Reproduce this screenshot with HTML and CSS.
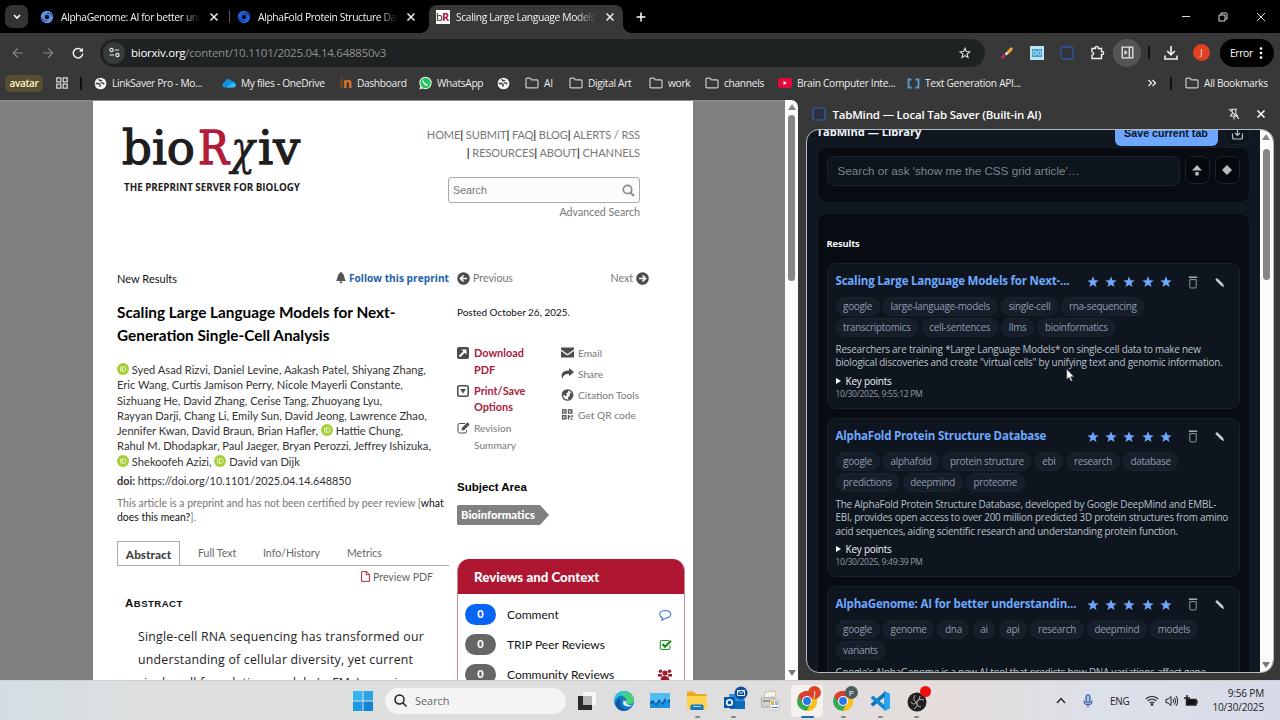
FILE: index.html
```html
<!DOCTYPE html>
<html lang="en">
<head>
  <meta charset="UTF-8" />
  <title>Scaling Large Language Models for Next-Generation Single-Cell Analysis</title>
  <link rel="stylesheet" href="styles.css">
</head>
<body>

  <svg class="sprite" width="0" height="0">
    <symbol id="x" viewBox="0 0 10 10"><path d="M1.500 1.500l7 7M8.500 1.500l-7 7" fill="none" stroke="currentColor" stroke-width="1.500"/></symbol>
    <symbol id="swirl" viewBox="0 0 14 14"><circle cx="7" cy="7" r="6.200" fill="currentColor"/><circle cx="7" cy="7" r="2.300" fill="#080b18"/><path d="M7 3.200c2.600-.6 5 1 5.300 3.400M7 10.800c-2.600.6-5-1-5.300-3.400" fill="none" stroke="#0c1b4d" stroke-width=".8"/></symbol>
    <symbol id="globe" viewBox="0 0 14 14"><circle cx="7" cy="7" r="6.300" fill="#f4f4f4"/><path d="M1.800 7h3l2 1.800-.6 1.700M5.200 2.200l1 1.800 2.600-.3M7 6.300h2.500l1.500 1.400" fill="none" stroke="#383838" stroke-width="1.400"/></symbol>
    <symbol id="folder" viewBox="0 0 14 12"><path d="M1 2.200q0-1 1-1h3l1.500 1.700H12q1 0 1 1v5.900q0 1-1 1H2q-1 0-1-1z" fill="none" stroke="#c9c9c9" stroke-width="1.200"/></symbol>
    <symbol id="star" viewBox="0 0 12 12"><path d="M6 .3l1.500 3.900 4.200.2-3.300 2.600 1.200 4.100L6 8.800l-3.600 2.300 1.200-4.100L.3 4.400l4.200-.2z" fill="#6ea8fe"/></symbol>
    <symbol id="trash" viewBox="0 0 10 13"><path d="M.8 1.200h8.400" fill="none" stroke="#b4bac3" stroke-width="1.400"/><path d="M1.800 3.600h6.400v7.200q0 1.200-1.200 1.200H3q-1.200 0-1.200-1.200z" fill="none" stroke="#9299a4"/></symbol>
    <symbol id="pencil" viewBox="0 0 12 12"><path d="M1.300 3L3.300 1 9.800 7.300l1.400 3.900-3.700-1.800z" fill="#c3c7ce"/></symbol>
    <symbol id="orcid" viewBox="0 0 12 12"><circle cx="6" cy="6" r="6" fill="#a6ce39"/><path d="M3.700 3.600v5M5.500 3.800v4.600h1.200c3 0 3-4.600 0-4.600z" fill="none" stroke="#eef8cf"/></symbol>
    <symbol id="chrome" viewBox="0 0 22 22"><circle cx="11" cy="11" r="10" fill="#34a853"/><path d="M2.300 6A10 10 0 0 1 20 6.500H11L7 13z" fill="#e33b2e"/><path d="M20 6.500A10 10 0 0 1 10.500 21L15 13l-2-6.500z" fill="#fbc116"/><circle cx="11" cy="11" r="5" fill="#fff"/><circle cx="11" cy="11" r="3.900" fill="#2877e8"/></symbol>
  </svg>

  <!-- tab strip -->
  <div class="tabstrip">
    <div class="tab-search"><svg width="8" height="6" viewBox="0 0 8 6"><path d="M1 1l3 3 3-3" fill="none" stroke="#fff" stroke-width="1.600"/></svg></div>
    <div class="tab">
      <svg class="fav light" width="14" height="14"><use href="#swirl"/></svg>
      <span class="tab-title">AlphaGenome: AI for better und</span>
      <svg class="close" width="10" height="10"><use href="#x"/></svg>
    </div>
    <div class="tab">
      <svg class="fav dark" width="14" height="14"><use href="#swirl"/></svg>
      <span class="tab-title">AlphaFold Protein Structure Dat</span>
      <svg class="close" width="10" height="10"><use href="#x"/></svg>
    </div>
    <div class="tab active">
      <span class="fav br">b<b>R</b></span>
      <span class="tab-title">Scaling Large Language Models</span>
      <svg class="close" width="10" height="10"><use href="#x"/></svg>
    </div>
    <svg class="new-tab" width="10" height="10" viewBox="0 0 10 10"><path d="M5 .6v8.800M.6 5h8.800" stroke="#fff" stroke-width="1.500"/></svg>
    <div class="win-buttons">
      <svg width="10" height="10" viewBox="0 0 10 10"><path d="M1 4.500h8" stroke="#ddd"/></svg>
      <svg width="10" height="10" viewBox="0 0 10 10"><path d="M1 3h6v6H1zM3 2.500V1h5.200q.8 0 .8.800V7H7.500" fill="none" stroke="#ddd"/></svg>
      <svg width="10" height="10" viewBox="0 0 10 10"><path d="M1 1l8 8M9 1L1 9" stroke="#ddd"/></svg>
    </div>
  </div>

  <!-- address bar -->
  <div class="toolbar">
    <div class="nav-buttons">
      <svg width="12" height="12" viewBox="0 0 12 12"><path d="M11 6H1.500M5.800 1.500L1.300 6l4.500 4.500" fill="none" stroke="#858585" stroke-width="1.200"/></svg>
      <svg width="12" height="12" viewBox="0 0 12 12"><path d="M1 6h9.500M6.200 1.500L10.700 6l-4.500 4.500" fill="none" stroke="#858585" stroke-width="1.200"/></svg>
      <svg width="12" height="12" viewBox="0 0 12 12"><path d="M10.700 6.500A4.700 4.700 0 1 1 9.300 2.800l1 1" fill="none" stroke="#f2f2f2" stroke-width="1.500"/><path d="M11 .8v4H7z" fill="#f2f2f2"/></svg>
    </div>
    <div class="omnibox">
      <span class="site-info"><svg width="11" height="11" viewBox="0 0 11 11" fill="none" stroke="#e5e5e5" stroke-width="1.200"><circle cx="2.500" cy="3" r="1.600"/><path d="M5.800 3H10M.5 8h4.700"/><circle cx="8.500" cy="8" r="1.600"/></svg></span>
      <span class="url">biorxiv.org<i>/content/10.1101/2025.04.14.648850v3</i></span>
      <svg width="12" height="12" viewBox="0 0 12 12"><path d="M6 1.200l1.300 3.300 3.600.2-2.800 2.300.9 3.500L6 8.600l-3 1.900.9-3.500-2.800-2.300 3.600-.2z" fill="none" stroke="#ddd" stroke-width="1.100"/></svg>
    </div>
    <div class="extensions">
      <div><svg width="14" height="14" viewBox="0 0 14 14" fill="none" stroke-linecap="round"><path d="M8 6.500L11.200 3" stroke="#f0a634" stroke-width="3.200"/><path d="M5.500 8.500L7.500 7" stroke="#dfe7ee" stroke-width="2.600" stroke-linecap="butt"/><path d="M2.300 11.600L4.200 9.800" stroke="#c92560" stroke-width="2.800"/></svg></div>
      <div><svg width="14" height="14" viewBox="0 0 14 14"><path d="M0 0h14v14H0z" fill="#bfe2f1"/><path d="M2 3h10v8H2z" fill="#3f9fce"/><path d="M3.500 5h2.500v4H3.500zM8 5h2.500v4H8zM6 7h2" fill="none" stroke="#d3edf8" stroke-width=".7"/></svg></div>
      <div><svg width="14" height="14" viewBox="0 0 14 14"><rect x="1" y="1" width="12" height="12" rx="2" fill="#2f333b" stroke="#3058a4" stroke-width="1.300"/></svg></div>
      <div><svg width="15" height="15" viewBox="0 0 15 15"><path d="M2 3.500h3.200c-.6-2.800 3.600-2.800 3 0H11.500v3c2.800-.6 2.800 3.600 0 3v4H2v-3.300c2.200-.3 2.200-3 0-3.300z" fill="none" stroke="#f2f2f2" stroke-width="1.400"/></svg></div>
      <div class="pressed"><svg width="13" height="13" viewBox="0 0 13 13"><path d="M1.200 1.200h10.600v10.600H1.200zM8.300 1v11" fill="none" stroke="#e8e8e8" stroke-width="1.300"/><path d="M3.500 4l3 2.500-3 2.500z" fill="#e8e8e8"/></svg></div>
    </div>
    <span class="divider"></span>
    <svg class="download" width="14" height="14" viewBox="0 0 14 14"><path d="M7 0v8.500M3.200 5L7 8.800 10.800 5M1 9.500V13h12V9.500" fill="none" stroke="#f2f2f2" stroke-width="1.600"/></svg>
    <span class="profile">J</span>
    <span class="error">Error <svg width="4" height="14" viewBox="0 0 4 14" fill="#fff"><circle cx="2" cy="2.500" r="1.300"/><circle cx="2" cy="7" r="1.300"/><circle cx="2" cy="11.500" r="1.300"/></svg></span>
  </div>

  <!-- bookmarks -->
  <div class="bookmarks">
    <div><span class="group-chip">avatar</span></div>
    <div><svg width="12" height="12" viewBox="0 0 12 12" fill="none" stroke="#d5d5d5" stroke-width="1.300"><path d="M.8.8H4.800v4H.8zM7.200.8h4v4h-4zM.8 7.200H4.800v4H.8zM7.200 7.200h4v4h-4z"/></svg></div>
    <div><span class="divider"></span></div>
    <div><svg width="13" height="13"><use href="#globe"/></svg>LinkSaver Pro - Mo...</div>
    <div><svg width="14" height="10" viewBox="0 0 14 10"><path d="M3 9.500C-.5 9.500-.5 5 2.500 4.500 3.500.5 8-.5 9.800 3.300 14.500 3 15 9.500 11 9.500z" fill="#1490df"/><path d="M4.500 9.500L10 5q4 0 4 2.500-.3 2-3 2z" fill="#32b8f1"/></svg>My files - OneDrive</div>
    <div class="dash"><b><i>i</i>n</b>Dashboard</div>
    <div><svg width="13" height="14" viewBox="0 0 13 14"><circle cx="6.500" cy="7" r="6.200" fill="#eafbee"/><path d="M.5 13.500l.8-3.500 2.200 2.500z" fill="#eafbee"/><circle cx="6.500" cy="7" r="5.200" fill="#24c45a"/><path d="M4.300 4.500c-.8 1.500 2.200 5 4.500 4.600" fill="none" stroke="#fff" stroke-width="1.400"/></svg>WhatsApp</div>
    <div><svg width="13" height="13"><use href="#globe"/></svg></div>
    <div><svg width="14" height="12"><use href="#folder"/></svg>AI</div>
    <div><svg width="14" height="12"><use href="#folder"/></svg>Digital Art</div>
    <div><svg width="14" height="12"><use href="#folder"/></svg>work</div>
    <div><svg width="14" height="12"><use href="#folder"/></svg>channels</div>
    <div><svg width="14" height="10" viewBox="0 0 14 10"><rect width="14" height="10" rx="2.500" fill="#e3083a"/><path d="M5.500 3v4L9 5z" fill="#fff"/></svg>Brain Computer Inte...</div>
    <div><svg width="13" height="11" viewBox="0 0 13 11"><path d="M4.500 1.500h-3v8h3M8.500 1.500h3v8h-3" fill="none" stroke="#5b9fd0" stroke-width="1.800"/></svg>Text Generation API...</div>
    <div><svg width="10" height="8" viewBox="0 0 10 8"><path d="M1.500 1l3 3-3 3M5.500 1l3 3-3 3" fill="none" stroke="#eee" stroke-width="1.300"/></svg></div>
    <div><span class="divider"></span></div>
    <div><svg width="14" height="12"><use href="#folder"/></svg>All Bookmarks</div>
  </div>

  <div class="window">
    <!-- bioRxiv page -->
    <div class="page">
      <div class="sheet">
        <header>
          <div class="logo">
            <svg width="182" height="47" viewBox="0 0 182 47">
              <g class="logo-text">
                <text x="1" y="36" textLength="73" lengthAdjust="spacingAndGlyphs">bio</text>
                <text class="red" x="77" y="36" textLength="31" lengthAdjust="spacingAndGlyphs">R</text>
                <text class="chi" x="110" y="36" textLength="24" lengthAdjust="spacingAndGlyphs">χ</text>
                <text x="137" y="36" textLength="42" lengthAdjust="spacingAndGlyphs">iv</text>
              </g>
            </svg>
            <div class="tagline">THE PREPRINT SERVER FOR BIOLOGY</div>
          </div>
          <div class="header-right">
            <div class="menu">HOME<b>|</b> SUBMIT<b>|</b> FAQ<b>|</b> BLOG<b>|</b> ALERTS / RSS<br><b>|</b> RESOURCES<b>|</b> ABOUT<b>|</b> CHANNELS</div>
            <div class="search-box">Search <svg width="13" height="13" viewBox="0 0 13 13" fill="none" stroke="#8d8d8d"><circle cx="5.500" cy="5.500" r="4.200" stroke-width="1.800"/><path d="M8.500 8.500l3.500 3.500" stroke-width="2.200"/></svg></div>
            <div class="advanced">Advanced Search</div>
          </div>
        </header>

        <div class="columns">
          <div class="article">
            <div class="article-top">
              <span>New Results</span>
              <span class="follow"><svg width="10" height="12" viewBox="0 0 10 12"><path d="M5 0q1 0 1 1c2.500.8 2 5 3.800 8H.2C2 6 1.500 1.800 4 1q0-1 1-1zM3.500 9.500h3q-.3 2-1.500 2t-1.500-2z" fill="#555"/></svg>Follow this preprint</span>
            </div>
            <h1>Scaling Large Language Models for Next-<br>Generation Single-Cell Analysis</h1>
            <p class="authors">
              <svg width="12" height="12"><use href="#orcid"/></svg> Syed Asad Rizvi, Daniel Levine, Aakash Patel, Shiyang Zhang,<br>
              Eric Wang, Curtis Jamison Perry, Nicole Mayerli Constante,<br>
              Sizhuang He, David Zhang, Cerise Tang, Zhuoyang Lyu,<br>
              Rayyan Darji, Chang Li, Emily Sun, David Jeong, Lawrence Zhao,<br>
              Jennifer Kwan, David Braun, Brian Hafler, <svg width="12" height="12"><use href="#orcid"/></svg> Hattie Chung,<br>
              Rahul M. Dhodapkar, Paul Jaeger, Bryan Perozzi, Jeffrey Ishizuka,<br>
              <svg width="12" height="12"><use href="#orcid"/></svg> Shekoofeh Azizi, <svg width="12" height="12"><use href="#orcid"/></svg> David van Dijk
            </p>
            <p class="doi"><b>doi:</b> https://doi.org/10.1101/2025.04.14.648850</p>
            <p class="note">This article is a preprint and has not been certified by peer review [<a>what<br>does this mean?</a>].</p>
            <div class="article-tabs">
              <span class="current">Abstract</span><span>Full Text</span><span>Info/History</span><span>Metrics</span>
            </div>
            <div class="preview"><svg width="9" height="11" viewBox="0 0 9 11"><path d="M.6.6h4.900l2.900 2.900v6.900H.6zM5.300.6v3.100h3" fill="none" stroke="#b0283f"/></svg>Preview PDF</div>
            <h2><span>A</span>BSTRACT</h2>
            <p class="abstract">Single-cell RNA sequencing has transformed our<br>understanding of cellular diversity, yet current<br>single-cell foundation models (scFMs) remain</p>
          </div>

          <aside>
            <div class="pager">
              <span><svg width="13" height="13" viewBox="0 0 13 13"><circle cx="6.500" cy="6.500" r="6.300" fill="#4d4d4d"/><path d="M10 6.500H4M6.500 3.500l-3 3 3 3" fill="none" stroke="#fff" stroke-width="1.700"/></svg>Previous</span>
              <span>Next<svg width="13" height="13" viewBox="0 0 13 13"><circle cx="6.500" cy="6.500" r="6.300" fill="#4d4d4d"/><path d="M3 6.500h6M6.500 3.500l3 3-3 3" fill="none" stroke="#fff" stroke-width="1.700"/></svg></span>
            </div>
            <div class="posted">Posted October 26, 2025.</div>
            <div class="tools">
              <ul class="main-tools">
                <li class="red"><svg width="12" height="12" viewBox="0 0 12 12"><rect width="12" height="12" rx="2" fill="#4d4d4d"/><path d="M2.500 9.500l5-5" stroke="#fff" stroke-width="2"/><path d="M4.500 2.500h5v5z" fill="#fff"/></svg>Download<br>PDF</li>
                <li class="red"><svg width="12" height="12" viewBox="0 0 12 12"><rect x=".8" y=".8" width="10.400" height="10.400" rx="1.500" fill="none" stroke="#4d4d4d" stroke-width="1.600"/><path d="M3 4h6L6 8.500z" fill="#4d4d4d"/></svg>Print/Save<br>Options</li>
                <li><svg width="13" height="12" viewBox="0 0 13 12"><path d="M8 1.500H2.500q-1.500 0-1.500 1.500v6.500Q1 11 2.500 11H8q1.500 0 1.500-1.500V8" fill="none" stroke="#4d4d4d"/><path d="M4.500 8.500l.5-2.800L10.500.3 12.700 2.500 7.300 8z" fill="#4d4d4d"/></svg>Revision<br>Summary</li>
              </ul>
              <ul>
                <li><svg width="13" height="11" viewBox="0 0 13 11"><path d="M0 .5h13v2L6.500 7 0 2.500zM0 4l6.500 4.500L13 4v6.500H0z" fill="#4d4d4d"/></svg>Email</li>
                <li><svg width="13" height="12" viewBox="0 0 13 12"><path d="M8 0l5 4-5 4.300V6Q2.500 5.500 1.200 11-1.500 2.500 8 2.500z" fill="#4d4d4d"/></svg>Share</li>
                <li><svg width="13" height="12" viewBox="0 0 12 12"><circle cx="6" cy="6" r="5.200" fill="#f5f5f5" stroke="#4d4d4d" stroke-width="1.300"/><path d="M1.200 3.500Q3.500 0 7 1.200L6.500 3.500 4.500 4l1 1.500-1 1.500-3-1zM8.500 3.500L11 5l-.8 3.500L7 11 6.500 8l1.800-.7z" fill="#4d4d4d"/></svg>Citation Tools</li>
                <li><svg width="13" height="11" viewBox="0 0 13 11" fill="none" stroke="#555" stroke-width="1.300"><path d="M1.600.8h3.400v3.300H1.600zM7.500.8h3.400v3.300H7.500zM1.600 6.600h3.400v3.300H1.600zM3 2.400h.8M9 2.400h.8M3 8.200h.8M7.500 6v4.500M7.500 7.500h2M11 6v2.500M9.500 10.200h2"/></svg>Get QR code</li>
              </ul>
            </div>
            <h3>Subject Area</h3>
            <span class="subject">Bioinformatics</span>
            <div class="reviews">
              <h4>Reviews and Context</h4>
              <div class="review"><span class="count blue">0</span>Comment<svg width="13" height="12" viewBox="0 0 13 12"><path d="M3.500 8.800C-1 6.500.500 1.500 6.500 1.500S13.800 8 7 9.300L2.800 11z" fill="none" stroke="#3f73dc" stroke-width="1.100"/></svg></div>
              <div class="review"><span class="count">0</span>TRIP Peer Reviews<svg width="13" height="12" viewBox="0 0 13 12"><path d="M10 1.500H2.800q-1.500 0-1.500 1.500v6q0 1.500 1.500 1.500h6.700q1.500 0 1.500-1.500V6.500" fill="none" stroke="#199c19" stroke-width="1.100"/><path d="M3.500 5L6 7.700l6-6" fill="none" stroke="#108a10" stroke-width="2"/></svg></div>
              <div class="review"><span class="count">0</span>Community Reviews<svg width="14" height="12" viewBox="0 0 14 12" fill="#9c1a2c"><circle cx="2.500" cy="2.300" r="1.800"/><circle cx="11.500" cy="2.300" r="1.800"/><circle cx="7" cy="4" r="2.600"/><path d="M0 7.500V5h3.500l1 2.500zM14 7.500V5h-3.500l-1 2.500zM2.500 12q0-5.500 4.500-5t4.500 5z"/></svg></div>
            </div>
          </aside>
        </div>
      </div>
    </div>
    <div class="scrollbar page-scroll"><i class="up"></i><i class="thumb"></i><i class="down"></i></div>

    <!-- side panel -->
    <div class="side">
      <div class="side-title">
        <svg width="14" height="14" viewBox="0 0 14 14"><rect x="1" y="1" width="12" height="12" rx="2" fill="#2b313d" stroke="#3260b4" stroke-width="1.200"/></svg>
        <span>TabMind — Local Tab Saver (Built-in AI)</span>
        <svg class="pin" width="12" height="12" viewBox="0 0 12 12" fill="none" stroke="#e5e5e5" stroke-width="1.100"><path d="M3 1.200h6M4.200 1.500v4L2.500 8h7L7.800 5.500v-4M6 8v3.500M1 .8l10 10"/></svg>
        <svg width="10" height="10"><use href="#x"/></svg>
      </div>
      <div class="frame">
        <div class="app">
          <div class="app-head">
            <strong>TabMind — Library</strong>
            <button class="save">Save current tab</button>
            <button class="icon-btn import"><svg width="13" height="13" viewBox="0 0 13 13"><path d="M6.500 1v7.500M4 6l2.500 2.500L9 6M1.500 6.500V10q0 2 2 2h6q2 0 2-2V6.500" fill="none" stroke="#b7bcc4" stroke-width="1.200"/></svg></button>
          </div>
          <div class="card search-card">
            <div class="query">Search or ask 'show me the CSS grid article'…</div>
            <button class="icon-btn"><svg width="10" height="11" viewBox="0 0 10 11"><path d="M5 0l5 5.500H0zM3.300 7h3.400v3.500H3.300z" fill="#b7babf"/></svg></button>
            <button class="icon-btn"><svg width="10" height="10" viewBox="0 0 10 10"><path d="M5 0l5 5-5 5-5-5z" fill="#b7babf"/></svg></button>
          </div>
          <div class="card results">
            <h5>Results</h5>

            <div class="item">
              <div class="item-head">
                <a>Scaling Large Language Models for Next-...</a>
                <span class="stars"><svg><use href="#star"/></svg><svg><use href="#star"/></svg><svg><use href="#star"/></svg><svg><use href="#star"/></svg><svg><use href="#star"/></svg></span>
                <svg width="10" height="13"><use href="#trash"/></svg>
                <svg class="edit" width="11" height="11"><use href="#pencil"/></svg>
              </div>
              <div class="tags"><span>google</span><span>large-language-models</span><span>single-cell</span><span>rna-sequencing</span></div>
              <div class="tags"><span>transcriptomics</span><span>cell-sentences</span><span>llms</span><span>bioinformatics</span></div>
              <p>Researchers are training *Large Language Models* on single-cell data to make new<br>biological discoveries and create "virtual cells" by unifying text and genomic information.</p>
              <div class="key">Key points</div>
              <time>10/30/2025, 9:55:12 PM</time>
            </div>

            <div class="item">
              <div class="item-head">
                <a>AlphaFold Protein Structure Database</a>
                <span class="stars"><svg><use href="#star"/></svg><svg><use href="#star"/></svg><svg><use href="#star"/></svg><svg><use href="#star"/></svg><svg><use href="#star"/></svg></span>
                <svg width="10" height="13"><use href="#trash"/></svg>
                <svg class="edit" width="11" height="11"><use href="#pencil"/></svg>
              </div>
              <div class="tags"><span>google</span><span>alphafold</span><span>protein structure</span><span>ebi</span><span>research</span><span>database</span></div>
              <div class="tags"><span>predictions</span><span>deepmind</span><span>proteome</span></div>
              <p>The AlphaFold Protein Structure Database, developed by Google DeepMind and EMBL-<br>EBI, provides open access to over 200 million predicted 3D protein structures from amino<br>acid sequences, aiding scientific research and understanding protein function.</p>
              <div class="key">Key points</div>
              <time>10/30/2025, 9:49:39 PM</time>
            </div>

            <div class="item">
              <div class="item-head">
                <a>AlphaGenome: AI for better understandin...</a>
                <span class="stars"><svg><use href="#star"/></svg><svg><use href="#star"/></svg><svg><use href="#star"/></svg><svg><use href="#star"/></svg><svg><use href="#star"/></svg></span>
                <svg width="10" height="13"><use href="#trash"/></svg>
                <svg class="edit" width="11" height="11"><use href="#pencil"/></svg>
              </div>
              <div class="tags"><span>google</span><span>genome</span><span>dna</span><span>ai</span><span>api</span><span>research</span><span>deepmind</span><span>models</span></div>
              <div class="tags"><span>variants</span></div>
              <p>Google's AlphaGenome is a new AI tool that predicts how DNA variations affect gene</p>
            </div>
          </div>
        </div>
        <div class="scrollbar"><i class="up"></i><i class="thumb"></i><i class="down"></i></div>
      </div>
    </div>
  </div>

  <!-- taskbar -->
  <div class="taskbar">
    <svg class="start" width="20" height="20" viewBox="0 0 20 20"><path d="M0 0h9.500v9.500H0z" fill="#35b5ee"/><path d="M10.500 0H20v9.500h-9.500z" fill="#29a4e6"/><path d="M0 10.500h9.500V20H0z" fill="#1d9be2"/><path d="M10.500 10.500H20V20h-9.500z" fill="#0f84d6"/></svg>
    <div class="task-search"><svg width="13" height="13" viewBox="0 0 13 13" fill="none" stroke="#222" stroke-width="1.500"><circle cx="5.500" cy="5.500" r="4.500"/><path d="M8.800 8.800L12.500 12.500"/></svg>Search</div>
    <div class="apps">
      <div><svg width="22" height="22" viewBox="0 0 22 22"><path d="M7 2h13v13H7z" fill="#f7f7f7"/><path d="M2 6h14v14H2z" fill="#2b2b2b"/><path d="M7 6h9v9H7z" fill="#b7b7b7"/></svg></div>
      <div><svg width="22" height="22" viewBox="0 0 22 22"><circle cx="11" cy="11" r="10" fill="#127bc9"/><path d="M1.500 8C4-1 18-2 21 8.500q.5 6-6 6-3.500 0-1.500-3.500C13 5 4 4 1.500 8z" fill="#48cf79"/><path d="M1.500 8C3 1 12-1 17 3 10 2 4 6 1.500 12z" fill="#2fc2dd"/><path d="M8 10c-3 6 3 11 9 8.500-4 4-13 3-14-3.500-.6-4 3-7 5-5z" fill="#0c57a4"/><path d="M10.500 10.500q-2 5 4 6 3 .3 5-1.500-2 .5-4.500-.3-3-1-1.500-3.200z" fill="#dceef2"/></svg></div>
      <div><svg width="22" height="22" viewBox="0 0 22 22"><path d="M1 3h20v15H1z" fill="#0b5fa8"/><path d="M1 3h20v6l-3 2-2-3-3 5-3-4-3 5-3-4-3 2z" fill="#52bdf2"/><path d="M1 14l3-1 3 3 4-4 3 3 3-5 4 3v5H1z" fill="#1994dd"/></svg></div>
      <div class="open"><svg width="22" height="22" viewBox="0 0 22 22"><path d="M1 3q0-1.500 1.500-1.500h5L10 4h9.500Q21 4 21 5.500V18H1z" fill="#e9a91f"/><path d="M1 6h20v12q0 1.500-1.500 1.500h-17Q1 19.500 1 18z" fill="#fdd250"/><path d="M4.500 20v-4q0-1.500 1.500-1.500h10q1.500 0 1.500 1.500v4z" fill="#1678bd"/><path d="M7 16.500h8" stroke="#9cd8f4"/></svg></div>
      <div class="open"><svg class="wide" width="26" height="26" viewBox="0 0 26 26"><path d="M7 8h15l1 14H9z" fill="#278fe0"/><path d="M8 15h15v8H8z" fill="#0f69bc"/><path d="M2 11h11v11H2z" fill="#0b59a6"/><circle cx="7.500" cy="16.500" r="2.800" fill="none" stroke="#fff" stroke-width="1.600"/><circle cx="19" cy="7" r="6.500" fill="#0e4f96"/><path d="M15.500 4.500h7v5h-7zl3.500 3 3.500-3" fill="none" stroke="#e3eefb"/></svg></div>
      <div><svg width="22" height="22" viewBox="0 0 22 22"><path d="M6 2l10-1 1 7H5z" fill="#f7f3e8" stroke="#b6ad9c" stroke-width=".7"/><path d="M2 8l13-1v10H3z" fill="#d3d2cf" stroke="#9b9892" stroke-width=".7"/><path d="M4 11h9" stroke="#867f75" stroke-width="1.500"/><path d="M11 10h9v10h-9z" fill="#fafafa" stroke="#aaa" stroke-width=".6"/><path d="M12 11h3v4h-3z" fill="#e5ae35"/><path d="M16 12h3M16 14h3M12.500 17.500h6.500" stroke="#397ab8"/></svg></div>
      <div class="open focused"><svg width="22" height="22"><use href="#chrome"/></svg><em>J</em></div>
      <div class="open"><svg width="22" height="22"><use href="#chrome"/></svg><em class="p">P</em></div>
      <div class="open"><svg width="22" height="22" viewBox="0 0 22 22"><path d="M15 1l6 2.500v15L15 21z" fill="#2aa5ee"/><path d="M16 1.500v5L4 16.500 1.500 14z" fill="#0c72bb"/><path d="M16 20.500v-5L4 5.500 1.500 8z" fill="#1489d3"/></svg></div>
      <div class="open"><svg width="22" height="22" viewBox="0 0 22 22"><circle cx="11" cy="12" r="9.500" fill="#211f20"/><path d="M9 5q-3 5 1.500 7.500M18 10q-6-2-7.500 2.500M8 19q5-3 2.500-7M5 12q2 4 5.500 0M14 6q0 4-3.500 6M15 17q-4 0-4.500-5" fill="none" stroke="#b7b4b5"/></svg><em class="rec"></em></div>
    </div>
    <div class="tray">
      <svg width="10" height="7" viewBox="0 0 10 7"><path d="M1 6l4-4.500L9 6" fill="none" stroke="#222" stroke-width="1.300"/></svg>
      <svg width="10" height="14" viewBox="0 0 10 14" fill="none" stroke="#2e569b" stroke-width="1.100"><rect x="3" y=".8" width="4" height="8" rx="2" fill="#a9bfe8"/><path d="M1 6.500q0 4.300 4 4.300t4-4.300M5 11v2.500"/></svg>
      <span class="lang">ENG</span>
      <svg width="14" height="11" viewBox="0 0 14 11" fill="none" stroke="#222" stroke-width="1.100"><path d="M.8 4Q7-1.500 13.200 4M2.800 6Q7 2 11.200 6M4.800 8Q7 6 9.200 8"/><circle cx="7" cy="9.500" r=".8" fill="#222"/></svg>
      <svg width="13" height="12" viewBox="0 0 13 12" fill="none" stroke="#222"><path d="M1 4.200h2L6 1.500v9L3 7.800H1zM8 4q1.500 2 0 4M9.500 2.500q2.800 3.500 0 7M11 1q3.500 5 0 10"/></svg>
      <svg width="14" height="12" viewBox="0 0 14 12"><path d="M2.500 4.500h9.500v5.500H2.500z" fill="#111" stroke="#222" stroke-width="1.500"/><path d="M13 5.500v3" stroke="#222" stroke-width="1.500"/><path d="M3 0v5M0 3h6" stroke="#222" stroke-width="1.500"/></svg>
      <div class="clock">9:56 PM<br>10/30/2025</div>
    </div>
  </div>

  <svg class="cursor" width="9" height="14" viewBox="0 0 9 14"><path d="M.7 1v10.500l2.400-2.200 1.700 3.900 1.600-.7-1.700-3.700H8z" fill="#fff" stroke="#333" stroke-width=".6"/></svg>

</body>
</html>
```
FILE: styles.css
```css
* {
  box-sizing: border-box;
}
body {
  margin: 0;
  width: 1280px;
  height: 720px;
  overflow: hidden;
  display: flex;
  flex-direction: column;
  position: relative;
  background: #383838;
  color: #eee;
  font-family: "Open Sans", sans-serif;
  white-space: nowrap;
}
svg {
  flex: none;
  display: block;
}
h1, h2, h3, h4, h5, p, ul {
  margin: 0;
  padding: 0;
}
.sprite {
  position: absolute;
}

/* tab strip */
.tabstrip {
  height: 33px;
  flex: none;
  background: #000;
  display: flex;
  align-items: center;
}
.tab-search {
  width: 23px;
  height: 23px;
  margin-left: 5px;
  margin-right: 4px;
  border-radius: 7px;
  background: #333;
  display: flex;
  align-items: center;
  justify-content: center;
}
.tab {
  width: 197px;
  height: 28px;
  padding-left: 8px;
  display: flex;
  align-items: center;
  align-self: flex-end;
  position: relative;
}
.tab + .tab::before {
  content: "";
  position: absolute;
  left: 0;
  top: 5px;
  width: 1px;
  height: 13px;
  background: #555;
}
.fav {
  width: 14px;
  height: 14px;
  margin-bottom: 5px;
}
.fav.light {
  color: #5f95e8;
}
.fav.dark {
  color: #1f5fd8;
}
.fav.br {
  background: #fff;
  color: #222;
  font: 11px/13px "Open Sans", sans-serif;
  letter-spacing: -0.8px;
}
.br b {
  color: #b01c3c;
}
.tab-title {
  width: 140px;
  margin-left: 7px;
  margin-bottom: 5px;
  overflow: hidden;
  font-size: 10.3px;
  letter-spacing: -0.36px;
  color: #f2f2f2;
  -webkit-mask-image: linear-gradient(90deg, #000 86%, transparent 100%);
  mask-image: linear-gradient(90deg, #000 86%, transparent 100%);
}
.close {
  margin-left: 8px;
  margin-bottom: 5px;
}
.tab + .tab.active {
  width: 194px;
  margin-left: 3px;
  padding-left: 7px;
  background: #383838;
  border-radius: 8px 8px 0 0;
}
.tab.active .tab-title {
  margin-left: 6px;
}
.tab.active .close {
  margin-left: 9px;
}
.tab + .tab.active::before, .tab.active::after {
  content: "";
  position: absolute;
  left: -8px;
  top: 20px;
  width: 8px;
  height: 8px;
  background: radial-gradient(circle at 0 0, transparent 7.5px, #383838 8px);
}
.tab.active::after {
  left: auto;
  right: -8px;
  background: radial-gradient(circle at 100% 0, transparent 7.5px, #383838 8px);
}
.new-tab {
  margin-left: 13px;
}
.win-buttons {
  margin-left: auto;
  margin-right: 14.5px;
  display: flex;
  gap: 27.5px;
}

/* toolbar */
.toolbar {
  height: 39px;
  flex: none;
  display: flex;
  align-items: center;
}
.nav-buttons {
  width: 100px;
  padding-left: 12px;
  display: flex;
  gap: 18px;
}
.omnibox {
  width: 885px;
  height: 28px;
  padding: 0 14px 0 3px;
  border-radius: 14px;
  background: #1f2223;
  display: flex;
  align-items: center;
}
.site-info {
  width: 22px;
  height: 22px;
  border-radius: 50%;
  background: #383b3c;
  display: flex;
  align-items: center;
  justify-content: center;
}
.url {
  flex: 1;
  margin-left: 6px;
  font-size: 11.5px;
  letter-spacing: -0.25px;
  color: #fff;
}
.url i {
  font-style: normal;
  color: #8e9091;
}
.extensions {
  margin-left: 8px;
  display: flex;
  gap: 2px;
}
.extensions div {
  width: 28px;
  height: 28px;
  border-radius: 50%;
  display: flex;
  align-items: center;
  justify-content: center;
}
.extensions .pressed {
  background: #545454;
}
.divider {
  width: 2px;
  height: 13px;
  background: #111;
}
.toolbar .divider {
  margin-left: 7px;
}
.download {
  margin-left: 14px;
}
.profile {
  width: 17px;
  height: 17px;
  margin-left: 15px;
  border-radius: 50%;
  background: #df4020;
  font-size: 9px;
  line-height: 17px;
  text-align: center;
}
.error {
  width: 54px;
  height: 28px;
  margin-left: 10px;
  padding: 0 11px 0 10px;
  border-radius: 14px;
  background: #000;
  color: #fff;
  font-size: 10.3px;
  letter-spacing: -0.35px;
  display: flex;
  align-items: center;
  justify-content: space-between;
}

/* bookmarks bar */
.bookmarks {
  height: 28px;
  flex: none;
  padding: 0 0 6px 5px;
  display: grid;
  grid-template-columns: 51px 24px 14px 128px 117px 80px 78px 28px 44px 80px 56px 73px 129px 240px 23px 15px 95px;
  font-size: 10.2px;
  letter-spacing: -0.31px;
}
.bookmarks div {
  display: flex;
  align-items: center;
  gap: 5px;
}
.group-chip {
  width: 38px;
  height: 17px;
  border-radius: 5px;
  background: #554e30;
  color: #fbf3c8;
  font-weight: 600;
  font-size: 10px;
  line-height: 16px;
  text-align: center;
}
.dash b {
  color: #e57b22;
  font-size: 14px;
  line-height: 14px;
}
.dash i {
  font-style: normal;
  color: #7c4625;
}

/* content area */
.window {
  height: 580px;
  flex: none;
  display: flex;
}
.page {
  width: 785px;
  background: #808080;
  border-top: 1px solid #8d8d8d;
  padding-left: 93px;
  overflow: hidden;
}
.sheet {
  width: 600px;
  height: 579px;
  padding-left: 24px;
  background: #fff;
  color: #333;
  font-family: Lato, sans-serif;
}
header {
  height: 167px;
  padding-left: 4px;
  width: 523px;
  display: flex;
  justify-content: space-between;
}
.logo {
  padding-top: 27px;
}
.logo svg {
  overflow: visible;
}
.logo-text {
  font-family: "DejaVu Serif", serif;
  font-size: 47px;
  fill: #1d1d1d;
  stroke: #1d1d1d;
  stroke-width: 1.3px;
}
.logo-text .red {
  fill: #b31b3b;
  stroke: #b31b3b;
}
.logo-text .chi {
  font-style: italic;
  stroke-width: 0.6px;
}
.tagline {
  margin: 5px 0 0 3px;
  font: 700 9.8px/16px "Open Sans", sans-serif;
  color: #1d1d1d;
}
.header-right {
  padding-top: 25px;
  text-align: right;
  color: #777;
}
.menu {
  font-size: 11.05px;
  line-height: 17.5px;
  letter-spacing: -0.1px;
}
.menu b {
  color: #333;
}
.search-box {
  width: 192px;
  height: 26px;
  margin: 16px 0 0 auto;
  padding: 0 4px;
  border: 1px solid #aaa;
  border-radius: 3px;
  background: #fcfcfc;
  display: flex;
  align-items: center;
  justify-content: space-between;
  font: 10.7px "Liberation Sans", sans-serif;
}
.advanced {
  font-size: 10.7px;
  line-height: 17px;
}
.columns {
  display: grid;
  grid-template-columns: 332px 228px;
  gap: 8px;
}
.article-top {
  height: 20px;
  display: flex;
  align-items: center;
  justify-content: space-between;
  font-size: 11.05px;
  color: #111;
}
.follow {
  display: flex;
  align-items: center;
  gap: 3px;
  font: 700 10.2px "Open Sans", sans-serif;
  color: #2361a8;
}
h1 {
  margin-top: 13px;
  font-size: 15.35px;
  font-weight: 700;
  line-height: 22.5px;
  color: #000;
}
.authors {
  margin-top: 16px;
  font-size: 11.15px;
  line-height: 15.3px;
}
.authors svg {
  display: inline-block;
  vertical-align: -1px;
}
.doi {
  margin-top: 4px;
  font-size: 10.88px;
  line-height: 15px;
}
.note {
  margin-top: 7.5px;
  font-size: 10.45px;
  line-height: 14px;
  color: #777;
}
.note a {
  color: #111;
}
.article-tabs {
  height: 26px;
  margin-top: 16px;
  padding-top: 1px;
  border-bottom: 1px solid #aaa;
  display: grid;
  grid-template-columns: 81px 65px 84px 60px;
  align-items: center;
  font-size: 10.54px;
  color: #666;
}
.article-tabs .current {
  width: 63px;
  height: 25px;
  border: 1px solid #aaa;
  border-bottom: 0;
  font-size: 11.8px;
  font-weight: 900;
  line-height: 25px;
  text-align: center;
  color: #444;
}
.preview {
  height: 22px;
  padding-right: 16px;
  display: flex;
  align-items: center;
  justify-content: flex-end;
  gap: 3px;
  font-size: 10.57px;
  color: #666;
}
h2 {
  margin: 6px 0 0 8px;
  font: 700 9.6px/18px "Liberation Sans", sans-serif;
  letter-spacing: 0.45px;
  color: #111;
}
h2 span {
  font-size: 11.5px;
}
.abstract {
  margin: 12px 0 0 21px;
  font: 12.3px/23px "Open Sans", sans-serif;
  letter-spacing: 0.23px;
  color: #222;
}

/* right column */
aside {
  color: #777;
}
.pager {
  width: 192px;
  height: 20px;
  display: flex;
  justify-content: space-between;
  font-size: 10.6px;
}
.pager span {
  display: flex;
  align-items: center;
  gap: 3px;
}
.posted {
  margin-top: 15px;
  font-size: 9.95px;
  line-height: 18px;
  color: #111;
}
.tools {
  margin-top: 24px;
  height: 134px;
  display: grid;
  grid-template-columns: 104px 124px;
  font-size: 10.2px;
}
.tools ul {
  list-style: none;
}
.tools li {
  display: grid;
  grid-template-columns: 17px auto;
  line-height: 16.8px;
  margin-bottom: 4px;
}
.tools li.red {
  font-size: 10.9px;
  font-weight: 700;
  color: #a81c3c;
}
.tools svg {
  margin-top: 2px;
}
h3 {
  font: 700 11.5px/16px "Liberation Sans", sans-serif;
  color: #000;
}
.subject {
  display: block;
  width: 92px;
  height: 20px;
  margin-top: 10px;
  padding-left: 4px;
  background: #808080;
  clip-path: polygon(0 1px, 1px 0, 83px 0, 100% 50%, 83px 100%, 1px 100%, 0 19px);
  color: #fff;
  font-size: 11.3px;
  font-weight: 900;
  line-height: 19px;
}
.reviews {
  height: 140px;
  margin-top: 34px;
  border: 1px solid #c98793;
  border-radius: 12px 12px 0 0;
  border-top: 0;
  overflow: hidden;
}
h4 {
  height: 35px;
  margin: 0 -1px;
  padding-left: 17px;
  background: #ae1632;
  color: #fff;
  font-size: 13.3px;
  font-weight: 900;
  line-height: 36px;
}
.review {
  height: 30px;
  padding: 0 12px 0 7px;
  display: flex;
  align-items: center;
  font-size: 12px;
  color: #111;
}
h4 + .review {
  margin-top: 5.5px;
}
.review svg {
  margin-left: auto;
}
.count {
  width: 31px;
  height: 21px;
  margin-right: 11px;
  border-radius: 11px;
  background: #666;
  color: #fff;
  font-size: 11px;
  font-weight: 900;
  line-height: 20px;
  text-align: center;
}
.count.blue {
  background: #0864f5;
}

/* scrollbars */
.scrollbar {
  width: 13px;
  flex: none;
  padding: 4px 3px;
  background: #fcfcfc;
  border-radius: 0 7px 0 0;
  display: flex;
  flex-direction: column;
  align-items: center;
}
.scrollbar .up, .scrollbar .down {
  border: 4px solid transparent;
  border-top: 0;
  border-bottom: 6px solid #858585;
}
.scrollbar .down {
  margin-top: auto;
  border-top: 6px solid #777;
  border-bottom: 0;
}
.scrollbar .thumb {
  width: 7px;
  height: 166px;
  margin-top: 5px;
  border-radius: 4px;
  background: #858585;
}

/* side panel */
.side {
  flex: 1;
  padding-left: 7.5px;
}
.side-title {
  height: 29px;
  padding: 0 14px 1px 6px;
  display: flex;
  align-items: center;
  font-size: 11.5px;
  font-weight: 600;
  letter-spacing: -0.2px;
  color: #fff;
}
.side-title span {
  flex: 1;
  margin-left: 7px;
}
.side-title .pin {
  margin-right: 16px;
}
.frame {
  width: 468px;
  height: 544px;
  border: 1px solid #b5bcc0;
  border-radius: 13px;
  background: #101721;
  display: flex;
  overflow: hidden;
}
.frame .scrollbar .thumb {
  height: 131px;
  margin-top: 9px;
}
.app {
  width: 453px;
  padding: 0 10px;
  overflow: hidden;
}
.app-head {
  height: 28px;
  margin-top: -11px;
  display: flex;
  align-items: flex-end;
  gap: 7px;
}
.app-head strong {
  flex: 1;
  margin-bottom: 3px;
  font-size: 11.1px;
  line-height: 25px;
  color: #f2f5fa;
}
button {
  padding: 0;
  border: 0;
}
.save {
  width: 103px;
  height: 27px;
  margin-bottom: 1px;
  border-radius: 6px;
  background: #6ea8fe;
  color: #081225;
  font: 700 10.7px/29px "Liberation Sans", sans-serif;
}
.icon-btn {
  width: 25px;
  height: 28px;
  border: 1px solid #1c222c;
  border-radius: 7px;
  background: #05090e;
  display: flex;
  align-items: center;
  justify-content: center;
}
.icon-btn.import {
  height: 27px;
  margin-bottom: 2px;
  background: #0f151e;
}
.import svg {
  margin-top: 3px;
}
.card {
  width: 433px;
  border: 1px solid #171d27;
  border-radius: 10px;
  background: #080c12;
}
.search-card {
  height: 56px;
  padding: 8px 9px;
  display: flex;
  gap: 5px;
}
.query {
  width: 353px;
  height: 30px;
  padding-left: 10px;
  border: 1px solid #1b2230;
  border-radius: 7px;
  background: #0e141d;
  color: #7f848c;
  font: 11.68px/27px "Liberation Sans", sans-serif;
}
.results {
  margin-top: 10px;
  padding: 21px 9px 0;
}
h5 {
  height: 28px;
  font-size: 9.4px;
  line-height: 18px;
  letter-spacing: -0.15px;
  color: #f5f7fa;
}
.item {
  width: 413px;
  margin-bottom: 8.5px;
  padding: 8px 8px 7.5px;
  border: 1px solid #1b222d;
  border-radius: 9px;
  background: #0f151e;
}
.item-head {
  height: 20px;
  margin-bottom: 5px;
  display: flex;
  align-items: center;
}
.item-head a {
  width: 251px;
  margin-bottom: 3px;
  color: #6ea8fe;
  font-size: 11.5px;
  font-weight: 700;
  letter-spacing: -0.19px;
}
.stars {
  width: 101px;
  display: flex;
  gap: 6.4px;
}
.stars svg {
  width: 12px;
  height: 12px;
}
.edit {
  margin-left: 16px;
}
.tags {
  height: 19px;
  margin-bottom: 2.3px;
  display: flex;
  gap: 3.3px;
}
.tags span {
  padding: 0 6.6px;
  border: 1px solid #1b2431;
  border-radius: 10px;
  background: #171e2a;
  color: #8f9bad;
  font-size: 9.9px;
  letter-spacing: -0.27px;
  line-height: 17px;
}
.item p {
  margin-top: 5.8px;
  margin-bottom: 4px;
  color: #b9c1cc;
  font-size: 9.9px;
  letter-spacing: -0.205px;
  line-height: 13.35px;
}
.key {
  display: flex;
  align-items: center;
  gap: 5px;
  color: #f0f3f7;
  font-size: 10px;
  letter-spacing: -0.24px;
  line-height: 14px;
}
.key::before {
  content: "";
  border: 3.5px solid transparent;
  border-left: 5px solid #fff;
  border-right: 0;
}
time {
  display: block;
  color: #939ba8;
  font-size: 8.6px;
  letter-spacing: -0.33px;
  line-height: 13px;
}

/* taskbar */
.taskbar {
  height: 40px;
  flex: none;
  display: flex;
  align-items: center;
  background: linear-gradient(90deg, #d3dee3 0, #dedfdf 150px, #dedede 700px, #e4dddb 950px, #dce0e9 1100px, #d7dbe8 100%);
  border-top: 1px solid #cfcfcf;
  color: #222;
}
.start {
  margin-left: 353px;
}
.task-search {
  width: 181px;
  height: 26px;
  margin-left: 12px;
  padding-left: 9px;
  border-radius: 13px;
  background: #f4f4f4;
  display: flex;
  align-items: center;
  gap: 8px;
  color: #666;
  font-size: 10.9px;
}
.apps {
  margin-left: 3px;
  display: flex;
}
.apps div {
  width: 36.6px;
  height: 34px;
  display: flex;
  align-items: center;
  justify-content: center;
  position: relative;
}
.apps .wide {
  margin: -4px 0 0 3px;
}
.apps .open::after {
  content: "";
  position: absolute;
  bottom: 0;
  left: 16px;
  width: 5px;
  height: 2px;
  border-radius: 1px;
  background: #888;
}
.apps .focused::before {
  content: "";
  position: absolute;
  left: 2px;
  top: 1px;
  width: 32px;
  height: 32px;
  border-radius: 4px;
  background: #f4f1ef;
}
.apps .focused svg {
  position: relative;
}
.apps .focused::after {
  left: 12px;
  width: 13px;
  background: #1a70ad;
}
.apps em {
  position: absolute;
  top: 2px;
  right: 4px;
  width: 13px;
  height: 13px;
  border-radius: 50%;
  background: #dd4424;
  color: #fff;
  font-size: 8px;
  font-style: normal;
  line-height: 13px;
  text-align: center;
}
.apps em.p {
  background: #4d5b63;
}
.apps em.rec {
  width: 11px;
  height: 11px;
  background: #f00c0c;
}
.tray {
  margin-left: auto;
  padding-right: 16px;
  display: flex;
  align-items: center;
}
.tray svg:nth-child(2) {
  margin-left: 17px;
}
.lang {
  width: 20px;
  margin: 0 15px 0 17px;
  font-size: 10px;
  letter-spacing: -0.3px;
}
.tray svg:nth-child(5), .tray svg:nth-child(6) {
  margin-left: 6px;
}
.clock {
  width: 60px;
  margin-left: 6px;
  text-align: right;
  font-size: 10px;
  letter-spacing: -0.15px;
  line-height: 13.5px;
}

.cursor {
  position: absolute;
  left: 1066px;
  top: 368px;
}
```
